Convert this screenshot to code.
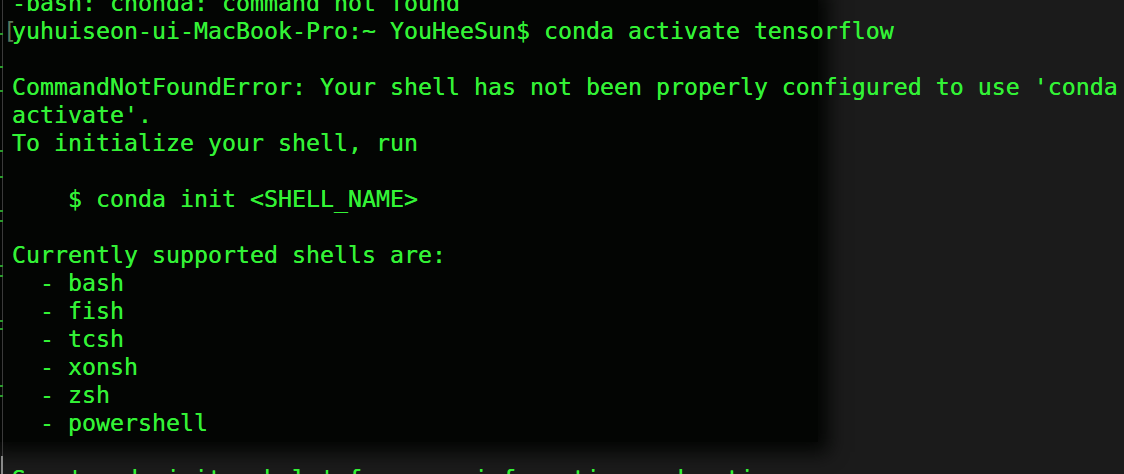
import React from 'react';

const lines: string[] = [
  "-bash: chonda: command not found",
  "yuhuiseon-ui-MacBook-Pro:~ YouHeeSun$ conda activate tensorflow",
  "",
  "CommandNotFoundError: Your shell has not been properly configured to use 'conda",
  "activate'.",
  "To initialize your shell, run",
  "",
  "    $ conda init <SHELL_NAME>",
  "",
  "Currently supported shells are:",
  "  - bash",
  "  - fish",
  "  - tcsh",
  "  - xonsh",
  "  - zsh",
  "  - powershell",
  "",
  "See 'conda init --help' for more information and options.",
];

// little green marks on the left gutter
const ticks = [33, 66, 90, 150, 176, 210, 220, 265, 275, 320, 328, 385, 395];

const App: React.FC = () => {
  return (
    <div className="relative w-[1124px] h-[474px] overflow-hidden bg-[#1b1b1b]">
      {/* dark shadowed pane behind the text */}
      <div className="absolute left-0 top-0 w-[818px] h-[442px] bg-[#030503] shadow-[0_0_18px_10px_#030503]" />

      {/* gutter */}
      <div className="absolute left-[2px] top-0 w-px h-[456px] bg-[#3a3a3a]" />
      <div className="absolute left-[1px] top-[456px] w-[2px] h-[18px] bg-[#8a8a8a]" />
      {ticks.map((t) => (
        <div key={t} className="absolute left-0 w-[3px] h-[2px] bg-[#2c9a2c]" style={{ top: t }} />
      ))}

      <div
        className="relative mt-[-11px] pl-[12px] text-[23.25px] leading-[28px] text-[#33f236] whitespace-pre [text-shadow:0_0_0.6px_#33f236]"
        style={{ fontFamily: '"DejaVu Sans Mono", "Liberation Mono", monospace' }}
      >
        {lines.map((l, i) => (
          <div key={i} className="h-[28px] relative">
            {i === 1 && (
              <span className="absolute left-[-9px] top-0 text-[#5b7a5b] [text-shadow:none]">[</span>
            )}
            {l}
          </div>
        ))}
      </div>
    </div>
  );
};

export default App;
